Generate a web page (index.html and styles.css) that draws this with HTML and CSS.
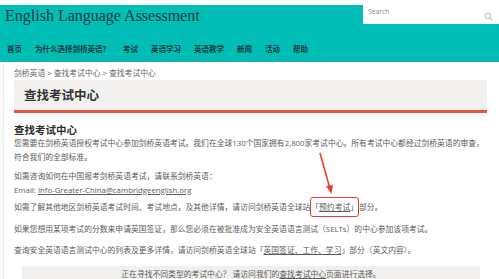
FILE: index.html
```html
<!DOCTYPE html>
<html lang="zh-CN">

<head>
    <meta charset="UTF-8">
    <meta name="viewport" content="width=device-width, initial-scale=1.0">
    <title>查找考试中心</title>
    <link rel="stylesheet" href="styles.css">
</head>

<body>
    <header class="masthead">
        <div class="brand-row">
            <div class="brand">English Language Assessment</div>
            <div class="search">
                <span class="search-hint">Search</span>
                <svg class="search-icon" width="9" height="9" viewBox="0 0 9 9">
                    <circle cx="3.8" cy="3.8" r="2.9" fill="none" stroke="#b9b9b9" stroke-width="1"/>
                    <line x1="5.9" y1="5.9" x2="8.4" y2="8.4" stroke="#b9b9b9" stroke-width="1.1"/>
                </svg>
            </div>
        </div>
        <nav class="mainnav">
            <a href="#">首页</a>
            <a href="#">为什么选择剑桥英语？</a>
            <a href="#">考试</a>
            <a href="#">英语学习</a>
            <a href="#">英语教学</a>
            <a href="#">新闻</a>
            <a href="#">活动</a>
            <a href="#">帮助</a>
        </nav>
    </header>

    <main class="page">
        <div class="crumbs">剑桥英语 &gt; 查找考试中心 &gt; 查找考试中心</div>
        <h1 class="page-title">查找考试中心</h1>

        <h3 class="section-title">查找考试中心</h3>
        <p class="intro">您需要在剑桥英语授权考试中心参加剑桥英语考试。我们在全球130个国家拥有2,800家考试中心。所有考试中心都经过剑桥英语的审查，符合我们的全部标准。</p>
        <p class="contact">如需咨询如何在中国报考剑桥英语考试，请联系剑桥英语：<br>
            Email: <a href="#" class="mail">Info-Greater-China@cambridgeenglish.org</a></p>
        <p>如需了解其他地区剑桥英语考试时间、考试地点，及其他详情，请访问剑桥英语全球站<span class="mark">「<a href="#">预约考试</a>」</span>部分。</p>
        <p>如果您想用某项考试的分数来申请英国签证，那么您必须在被批准成为安全英语语言测试（SELTs）的中心参加该项考试。</p>
        <p>查询安全英语语言测试中心的列表及更多详情，请访问剑桥英语全球站「<a href="#">英国签证、工作、学习</a>」部分（英文内容）。</p>

        <div class="note">正在寻找不同类型的考试中心？ 请访问我们的<a href="#">查找考试中心</a>页面进行选择。</div>
    </main>

    <svg class="arrow" width="499" height="279" viewBox="0 0 499 279">
        <line x1="320" y1="153" x2="329.5" y2="187" stroke="#e9402c" stroke-width="1.6"/>
        <polygon points="326,186 333,185 331.5,194" fill="#e9402c"/>
    </svg>
</body>

</html>
```

FILE: styles.css
```css
body {
    margin: 0;
    position: relative;
    font-family: "Open Sans", "Noto Sans CJK SC", sans-serif;
    color: #5b5b5b;
    background: #fff;
    overflow: hidden;
}

a {
    color: inherit;
}

.masthead {
    margin-top: 5px;
    background: #00bdb5;
    border-bottom: 2px solid #17b1a8;
}

.brand-row {
    display: flex;
    justify-content: space-between;
    height: 19px;
}

.brand {
    font-family: "Liberation Serif", serif;
    font-size: 16px;
    line-height: 21px;
    color: #083c42;
    padding-left: 5px;
}

.search {
    width: 136px;
    background: #fff;
    display: flex;
    justify-content: space-between;
    align-items: flex-start;
    margin-top: -5px;
    height: 24px;
    box-sizing: border-box;
    padding: 7px 6px 0 5px;
}

.search-hint {
    font-size: 6.8px;
    line-height: 9px;
    color: #8a8a8a;
}

.search-icon {
    margin-top: 5px;
}

.mainnav {
    display: flex;
    padding: 18px 0 5px 7px;
    font-family: "Noto Sans CJK SC", sans-serif;
    font-size: 7.5px;
    line-height: 13px;
    font-weight: bold;
}

.mainnav a {
    color: #173a3c;
    text-decoration: none;
    margin-right: 13px;
}

.page {
    margin-left: 3px;
    border-left: 1px solid #ececec;
    padding: 5px 12px 0 10px;
    font-size: 7.8px;
}

.crumbs {
    line-height: 12px;
    color: #666;
    margin-bottom: 1px;
}

.page-title {
    margin: 0;
    background: #f1f0ee;
    border-bottom: 3px solid #e9533f;
    height: 30px;
    line-height: 30px;
    padding-left: 10px;
    font-family: "Noto Sans CJK SC", sans-serif;
    font-size: 12.5px;
    font-weight: bold;
    color: #333;
}

.section-title {
    margin: 10px 0 0;
    font-size: 10.5px;
    line-height: 14px;
    color: #2e2e2e;
}

.page p {
    margin: 0 0 8px;
    line-height: 13.5px;
}

.page .intro {
    margin-bottom: 6px;
}

.page .contact {
    margin-bottom: 4px;
}

.mark {
    border: 1.4px solid #e5402d;
    border-radius: 3px;
    padding: 4px 0;
}

.note {
    margin: 5px 7px 0 8px;
    background: #f1f0ee;
    padding: 2px 0 6px;
    line-height: 13px;
    text-align: center;
}

.arrow {
    position: absolute;
    left: 0;
    top: 0;
    pointer-events: none;
}
```
